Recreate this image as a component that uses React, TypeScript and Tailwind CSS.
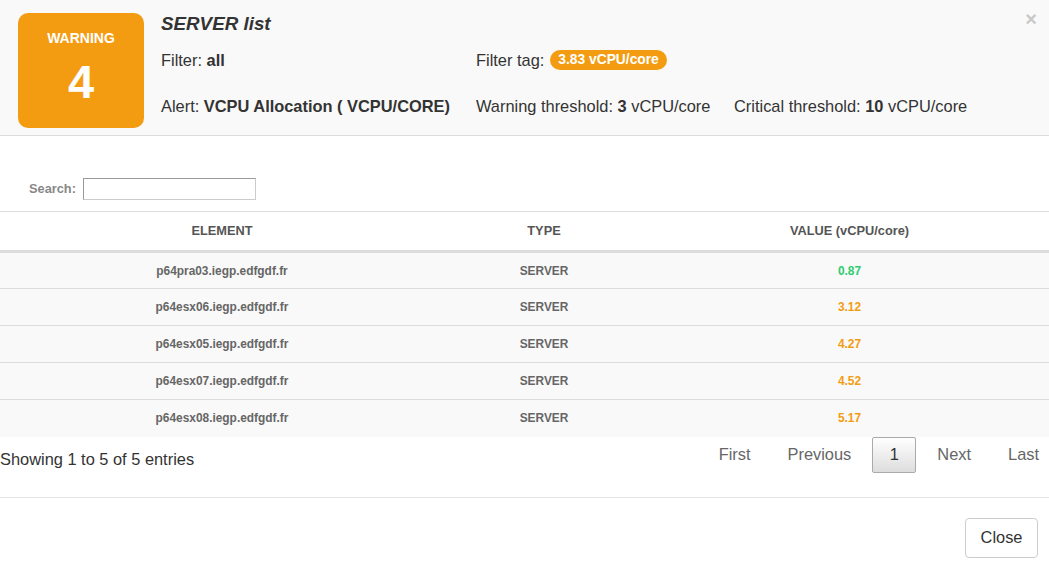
const rows = [
  { name: "p64pra03.iegp.edfgdf.fr", value: "0.87", color: "text-[#2ecc71]" },
  { name: "p64esx06.iegp.edfgdf.fr", value: "3.12", color: "text-[#f39c12]" },
  { name: "p64esx05.iegp.edfgdf.fr", value: "4.27", color: "text-[#f39c12]" },
  { name: "p64esx07.iegp.edfgdf.fr", value: "4.52", color: "text-[#f39c12]" },
  { name: "p64esx08.iegp.edfgdf.fr", value: "5.17", color: "text-[#f39c12]" },
]

export default function App() {
  return (
    <div className="w-[1049px] h-[566px] bg-white text-[#333] overflow-hidden font-['Liberation_Sans',Arial,sans-serif]">
      <div className="relative h-[136px] bg-[#f9f9f9] border-b border-[#ddd] flex pl-[18px] pt-[13px]">
        <div className="w-[126px] h-[115px] rounded-[10px] bg-[#f39c12] text-white flex flex-col items-center">
          <div className="mt-[18px] text-[14px] font-bold leading-none">WARNING</div>
          <div className="mt-[13px] text-[47px] font-bold leading-none">4</div>
        </div>
        <div className="ml-[17px] flex flex-col text-[16.4px]">
          <div className="text-[18.8px] font-bold italic leading-none mt-[2px]">SERVER list</div>
          <div className="flex items-center mt-[16px] h-[20px]">
            <div className="w-[315px]">
              Filter: <b>all</b>
            </div>
            <div className="flex items-center">
              Filter tag:
              <span className="ml-[6px] px-[8px] h-[20px] leading-[20px] rounded-full bg-[#f39c12] text-white text-[13.8px] font-bold">
                3.83 vCPU/core
              </span>
            </div>
          </div>
          <div className="flex items-center mt-[26px] h-[20px]">
            <div className="w-[315px]">
              Alert: <b>VCPU Allocation ( VCPU/CORE)</b>
            </div>
            <div className="w-[258px]">
              Warning threshold: <b>3</b> vCPU/core
            </div>
            <div>
              Critical threshold: <b>10</b> vCPU/core
            </div>
          </div>
        </div>
        <span className="absolute right-[12px] top-[9px] text-[20px] font-bold text-[#c8c8c8] leading-none">×</span>
      </div>

      <div className="flex items-center pl-[29px] mt-[42px] h-[22px]">
        <span className="text-[12.8px] font-bold text-[#888]">Search:</span>
        <input className="ml-[7px] w-[173px] h-[22px] border border-[#ccc] border-t-[#999] border-l-[#999] bg-white outline-none" />
      </div>

      <table className="w-full mt-[11px] border-collapse font-bold">
        <thead>
          <tr className="h-[40px] border-t border-[#ddd] border-b-[3px] border-b-[#ddd] text-[#555] text-[12.8px]">
            <th className="w-[444px] font-bold">ELEMENT</th>
            <th className="w-[200px] font-bold">TYPE</th>
            <th className="font-bold pl-[6px]">VALUE (vCPU/core)</th>
          </tr>
        </thead>
        <tbody>
          {rows.map((r, i) => (
            <tr key={r.name} className={`h-[37px] bg-[#f9f9f9] text-[#666] text-[11.9px] text-center ${i < rows.length - 1 ? "border-b border-[#ddd]" : ""}`}>
              <td className="pt-[2px]">{r.name}</td>
              <td className="pt-[2px]">SERVER</td>
              <td className={`${r.color} pl-[6px] pt-[2px]`}>{r.value}</td>
            </tr>
          ))}
        </tbody>
      </table>

      <div className="flex items-center justify-between h-[36px] text-[16.4px]">
        <div className="text-[#333] mt-[10px]">Showing 1 to 5 of 5 entries</div>
        <div className="flex items-center text-[#666] pr-[10px]">
          <span className="mr-[37px]">First</span>
          <span className="mr-[21px]">Previous</span>
          <span className="w-[44px] h-[36px] flex items-center justify-center border border-[#aaa] rounded-[2px] bg-gradient-to-b from-white to-[#ddd] text-[#333]">1</span>
          <span className="ml-[21px]">Next</span>
          <span className="ml-[37px]">Last</span>
        </div>
      </div>

      <div className="border-t border-[#e5e5e5] mt-[24px] flex justify-end pr-[11px] pt-[20px]">
        <button className="w-[73px] h-[40px] border border-[#ccc] rounded-[4px] bg-white text-[16.4px] text-[#333]">Close</button>
      </div>
    </div>
  )
}
